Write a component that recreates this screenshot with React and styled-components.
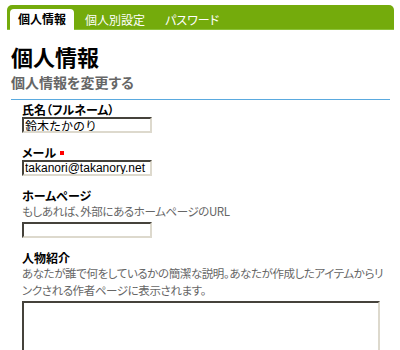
import React from 'react';
import styled, { createGlobalStyle } from 'styled-components';

const GlobalStyle = createGlobalStyle`
  body {
    margin: 0;
    background: #fff;
    font-family: "Noto Sans CJK JP", "Noto Sans", sans-serif;
    color: #000;
  }
`;

const TabBar = styled.div`
  display: flex;
  align-items: flex-end;
  height: 25px;
  margin: 5px 6px 0 7px;
  padding-left: 3px;
  background: #74ab0c;
  border-radius: 5px 5px 0 0;
  border-bottom: 1px solid #8cc23a;
  box-sizing: border-box;
`;

const Tab = styled.div`
  height: ${p => (p.$active ? '21px' : '20px')};
  line-height: 20px;
  padding: 0 ${p => (p.$active ? '8px' : '10px')};
  margin: 0 ${p => (p.$active ? '1px' : '0')} -1px 0;
  font-size: 12px;
  font-weight: ${p => (p.$active ? 700 : 400)};
  font-feature-settings: "palt";
  color: ${p => (p.$active ? '#000' : '#fff')};
  background: ${p => (p.$active ? '#fff' : 'transparent')};
  border-radius: 4px 4px 0 0;
`;

const Content = styled.div`
  margin: 0 10px;
`;

const Title = styled.h1`
  margin: 13px 0 0 1px;
  font-size: 22px;
  line-height: 26px;
  font-weight: 700;
  color: #000;
`;

const Subtitle = styled.h2`
  margin: 4px 0 0 1px;
  font-size: 14px;
  line-height: 18px;
  font-weight: 700;
  color: #666;
  font-feature-settings: "palt";
  padding-bottom: 8px;
  border-bottom: 1px solid #5aaadf;
`;

const Form = styled.form`
  padding: 2px 0 0 12px;
`;

const Field = styled.div`
  margin-bottom: 12px;
`;

const Label = styled.label`
  display: block;
  font-size: 12px;
  line-height: 15px;
  font-weight: 700;
  font-feature-settings: "palt";
`;

const Required = styled.span`
  display: inline-block;
  width: 4px;
  height: 4px;
  margin-left: 4px;
  background: #f00;
  vertical-align: 3px;
`;

const Hint = styled.p`
  margin: 0 0 2px;
  width: 362px;
  font-size: 11.5px;
  line-height: 17px;
  letter-spacing: -0.4px;
  color: #666;
  font-feature-settings: "palt";
`;

const Input = styled.input`
  display: block;
  box-sizing: border-box;
  width: 130px;
  height: 16px;
  margin: 0;
  padding: 0 1px;
  font-family: "Liberation Sans", "Noto Sans CJK JP", sans-serif;
  font-size: 12px;
  color: #000;
  background: #fff;
  border-style: solid;
  border-width: 2px;
  border-color: #45423b #ddd9cd #ddd9cd #45423b;
  outline: none;
`;

const TextArea = styled.textarea`
  display: block;
  box-sizing: border-box;
  width: 358px;
  height: 80px;
  margin: 0;
  padding: 1px;
  resize: none;
  background: #fff;
  border-style: solid;
  border-width: 2px;
  border-color: #45423b #ddd9cd #ddd9cd #45423b;
  outline: none;
`;

export default function App() {
  return (
    <>
      <GlobalStyle />
      <TabBar>
        <Tab $active>個人情報</Tab>
        <Tab>個人別設定</Tab>
        <Tab>パスワード</Tab>
      </TabBar>
      <Content>
        <Title>個人情報</Title>
        <Subtitle>個人情報を変更する</Subtitle>
        <Form>
          <Field>
            <Label>氏名（フルネーム）</Label>
            <Input defaultValue="鈴木たかのり" />
          </Field>
          <Field>
            <Label>メール<Required /></Label>
            <Input defaultValue="takanori@takanory.net" />
          </Field>
          <Field>
            <Label>ホームページ</Label>
            <Hint>もしあれば、外部にあるホームページのURL</Hint>
            <Input />
          </Field>
          <Field>
            <Label>人物紹介</Label>
            <Hint>あなたが誰で何をしているかの簡潔な説明。あなたが作成したアイテムからリンクされる作者ページに表示されます。</Hint>
            <TextArea />
          </Field>
        </Form>
      </Content>
    </>
  );
}
